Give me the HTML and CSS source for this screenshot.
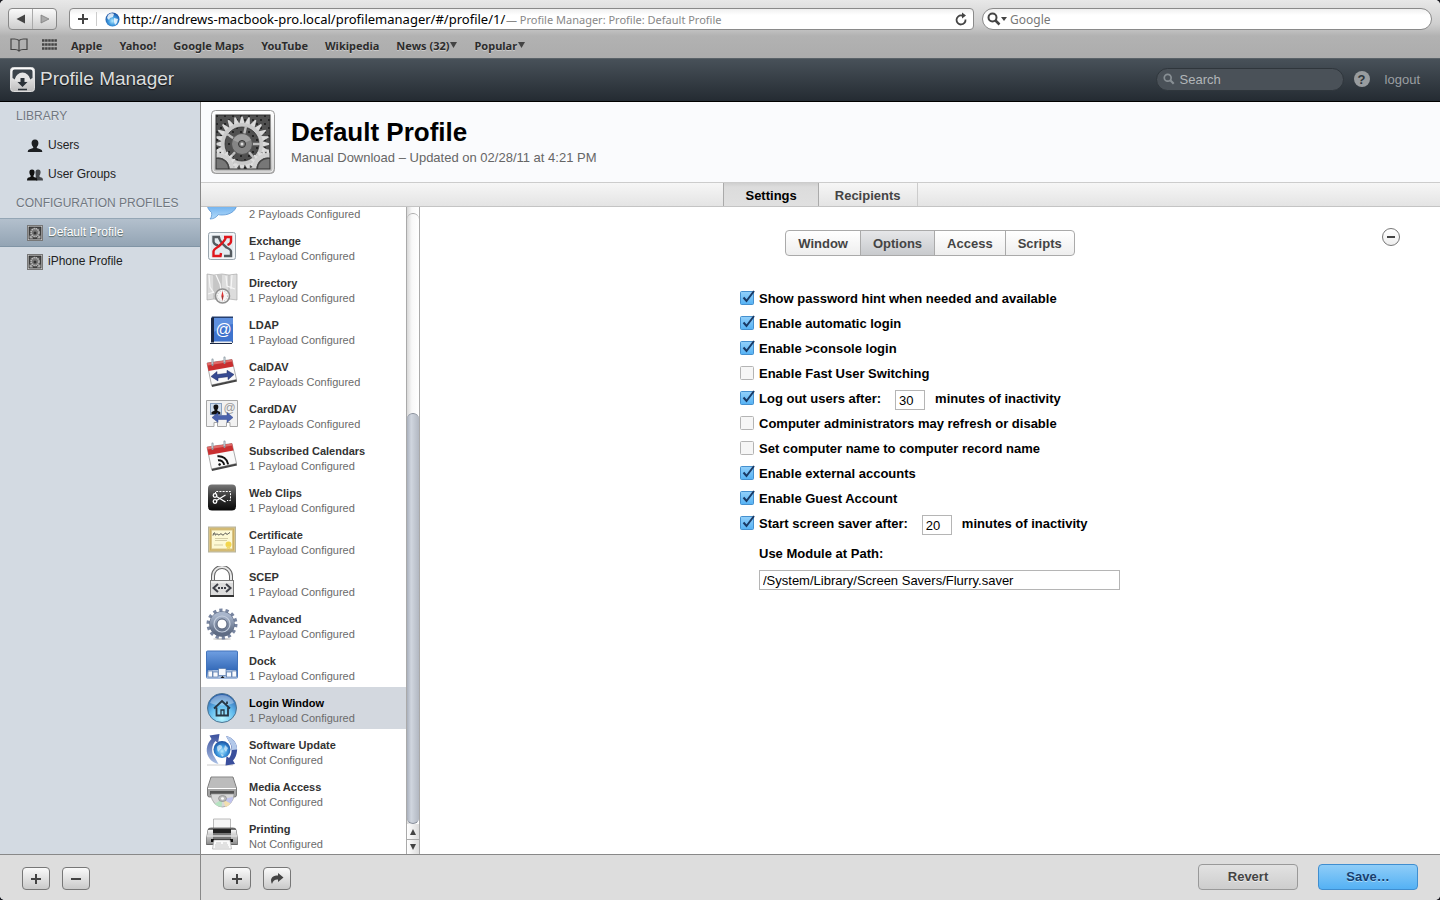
FILE: index.html
```html
<!DOCTYPE html>
<html lang="en">
<head>
<meta charset="utf-8">
<title>Profile Manager: Profile: Default Profile</title>
<link rel="stylesheet" href="styles.css">
</head>
<body>
<svg class="defs" aria-hidden="true">
  <defs>
    <linearGradient id="g-light" x1="0" y1="0" x2="0" y2="1"><stop offset="0" stop-color="#fff"/><stop offset="1" stop-color="#bdbdbd"/></linearGradient>
    <linearGradient id="g-steel" x1="0" y1="0" x2="0" y2="1"><stop offset="0" stop-color="#f4f4f4"/><stop offset="1" stop-color="#8d8d8d"/></linearGradient>
    <linearGradient id="g-dark" x1="0" y1="0" x2="0" y2="1"><stop offset="0" stop-color="#777"/><stop offset=".5" stop-color="#333"/><stop offset="1" stop-color="#080808"/></linearGradient>
    <linearGradient id="g-blue" x1="0" y1="0" x2="0" y2="1"><stop offset="0" stop-color="#6f9fe2"/><stop offset="1" stop-color="#1d55a8"/></linearGradient>
    <linearGradient id="g-chat" x1="0" y1="0" x2="0" y2="1"><stop offset="0" stop-color="#4f97e0"/><stop offset=".6" stop-color="#79b7f0"/><stop offset="1" stop-color="#b5dcfb"/></linearGradient>
    <linearGradient id="g-gear" x1="0" y1="0" x2="0" y2="1"><stop offset="0" stop-color="#a9b6cc"/><stop offset="1" stop-color="#5f6c84"/></linearGradient>
    <linearGradient id="g-navy" x1="0" y1="0" x2="0" y2="1"><stop offset="0" stop-color="#3a4f9c"/><stop offset="1" stop-color="#a9bfe4"/></linearGradient>
    <radialGradient id="g-orb" cx=".5" cy=".85" r=".85"><stop offset="0" stop-color="#b8f6ff"/><stop offset=".5" stop-color="#62bcee"/><stop offset="1" stop-color="#2456a8"/></radialGradient>
    <radialGradient id="g-globe" cx=".5" cy=".6" r=".6"><stop offset="0" stop-color="#b5eaff"/><stop offset=".5" stop-color="#3f9be0"/><stop offset="1" stop-color="#174a9c"/></radialGradient>
    <pattern id="p-dots" width="8" height="8" patternUnits="userSpaceOnUse"><rect width="8" height="8" fill="#505050"/><circle cx="2" cy="2" r="1" fill="#161616"/><circle cx="6" cy="6" r="1" fill="#161616"/></pattern>
    <clipPath id="c-plate"><rect x="5" y="5" width="54" height="54"/></clipPath>

    <g id="teeth3">
      <path id="tooth" d="M-2.800-20L-.7-27.500H.7L2.800-20z"/>
      <use href="#tooth" transform="rotate(15)"/>
      <use href="#tooth" transform="rotate(30)"/>
    </g>
    <g id="teeth-quarter"><use href="#teeth3"/><use href="#teeth3" transform="rotate(45)"/></g>
    <g id="teeth"><use href="#teeth-quarter"/><use href="#teeth-quarter" transform="rotate(90)"/><use href="#teeth-quarter" transform="rotate(180)"/><use href="#teeth-quarter" transform="rotate(270)"/></g>

    <symbol id="i-profile" viewBox="0 0 64 64">
      <rect x=".5" y=".5" width="63" height="63" rx="4" fill="url(#g-light)" stroke="#999"/>
      <rect x="2" y="2" width="60" height="60" rx="3" fill="none" stroke="#fff" stroke-opacity=".7"/>
      <g clip-path="url(#c-plate)">
        <rect x="5" y="5" width="54" height="54" fill="url(#p-dots)"/>
        <g transform="translate(31 34)" fill="#dadada">
          <use href="#teeth"/>
          <circle r="19" fill="none" stroke="#c9c9c9" stroke-width="4"/>
          <circle r="17" fill="none" stroke="#333" stroke-width=".8"/>
          <path d="M0 0L4-18M0 0H18M0 0L-15-10M0 0L-12 14M0 0L12 14" stroke="#bdbdbd" stroke-width="2.500"/>
          <circle r="10.500" fill="#858585" stroke="#555"/>
          <path d="M-9-4A10 10 0 0 1 9-4L0 0z" fill="#a0a0a0"/>
          <circle r="3.500" fill="#777" stroke="#333"/><circle r="1.500" fill="#ddd"/>
        </g>
        <g transform="translate(7 59) scale(.72)" fill="#dedede"><use href="#teeth"/><circle r="19" fill="#777" stroke="#d0d0d0" stroke-width="6"/><circle r="15" fill="#777" stroke="#444" stroke-width="2"/></g>
        <g transform="translate(57 59) scale(.72)" fill="#dedede"><use href="#teeth"/><circle r="19" fill="#777" stroke="#d0d0d0" stroke-width="6"/><circle r="15" fill="#777" stroke="#444" stroke-width="2"/></g>
      </g>
      <rect x="5" y="5" width="54" height="54" fill="none" stroke="#333"/>
    </symbol>

    <symbol id="i-profile-small" viewBox="0 0 16 16">
      <rect x=".5" y=".5" width="15" height="15" fill="#dcdcdc" stroke="#777"/>
      <rect x="2" y="2" width="12" height="12" fill="#505050" stroke="#222" stroke-width=".8"/>
      <circle cx="8" cy="7.500" r="4" fill="#777" stroke="#bdbdbd" stroke-width="1.500" stroke-dasharray="1.500 .6"/>
      <circle cx="8" cy="8" r="1.500" fill="#333"/>
      <path d="M2.500 10.500Q5 10.500 6 13.500H2.500zM13.500 10.500Q11 10.500 10 13.500h3.500z" fill="#aaa"/>
    </symbol>

    <symbol id="i-user" viewBox="0 0 16 16">
      <path d="M8 1.500c2.600 0 3.600 1.700 3.400 4-.1 1.500-.8 2.700-1.600 3.400v1.200c1.800.8 4.200 1.100 4.900 1.900.4.500.5 1.200.6 2.000H.7c.1-.8.200-1.500.6-2 .7-.8 3.100-1.100 4.900-1.900V8.900C5.400 8.200 4.700 7 4.600 5.500 4.400 3.200 5.400 1.500 8 1.500z" fill="#1d1f22"/>
    </symbol>
    <symbol id="i-users" viewBox="0 0 16 16">
      <path d="M11 2.500c1.900 0 2.700 1.200 2.600 3.100-.1 1.300-.5 2.300-1.100 2.900v1.300c1.300.6 2.600.9 3 1.500.4.500.4 1.300.5 2.200H9L8.500 5.500C8.400 3.700 9.300 2.500 11 2.500z" fill="#44474b"/>
      <path d="M5 2.500c1.900 0 2.700 1.200 2.600 3.100-.1 1.300-.5 2.300-1.100 2.900v1.300c1.300.6 2.800.9 3.300 1.500.4.500.4 1.300.5 2.200H0c.1-.9.100-1.700.5-2.200.5-.6 1.800-.9 3.100-1.500V8.500c-.6-.6-1.100-1.600-1.200-2.900C2.300 3.700 3.100 2.500 5 2.500z" fill="#111"/>
    </symbol>

    <symbol id="i-chat" viewBox="0 0 32 32">
      <path d="M16 3c9 0 15 5 15 12S25 27 16 27c-1.500 0-2.500 0-3.700-.4C10.500 29 8 31 4 31c1.500-1.500 2-4 1.500-6.500C2.500 22 1 19 1 15 1 8 7 3 16 3z" fill="url(#g-chat)" stroke="#5b95d3" stroke-width=".8"/>
    </symbol>

    <symbol id="i-exchange" viewBox="0 0 32 32">
      <rect x="2.500" y="2.500" width="27" height="27" rx="2" fill="#e4ebf0" stroke="#9ba6ae"/>
      <rect x="4" y="4" width="24" height="24" rx="1" fill="none" stroke="#fff"/>
      <g fill="none" stroke-width="2.400">
        <path d="M14 7H7.500v4.500q0 2.500 4.500 4" stroke="#555b60"/><path d="M13 7q0 4 7.500 10.500 4.500 2 4.500 4V26h-7" stroke="#555b60"/>
        <path d="M18 7h7v4.500q0 2-3.500 3.500" stroke="#e0161c"/><path d="M20 7q-1 4-7.500 9.500-5 3-5 5V26h7l.5-3" stroke="#e0161c"/>
      </g>
    </symbol>

    <symbol id="i-directory" viewBox="0 0 32 32">
      <path d="M1 2l7 1 8-1 7 1 8-1v26l-8-1-7 1-8-1-7 1z" fill="#dcdcdc" stroke="#aaa" stroke-width=".7"/>
      <path d="M8 3v24M23 3v24" stroke="#b5b5b5"/><path d="M8 3l8-1v26l-8-1z" fill="#c6c6c6"/><path d="M3 3l1 12 4 6M10 3l4 9 1 6M20 4l1 10 8 3M26 3l-1 14M2 22l6-2" fill="none" stroke="#f6f6f6" stroke-width="1.200"/>
      <circle cx="16.500" cy="24" r="7" fill="#f6f6f6" stroke="#8f8f8f" stroke-width="1.600"/>
      <circle cx="16.500" cy="24" r="5" fill="none" stroke="#bbb" stroke-dasharray="1 1.500"/>
      <path d="M16.500 19l1.200 5h-2.400z" fill="#d33"/><path d="M16.500 29l1.200-5h-2.400z" fill="#a33"/>
    </symbol>

    <symbol id="i-ldap" viewBox="0 0 32 32">
      <path d="M6 2.500h21V29H5V4.500z" fill="#263f6e"/><path d="M4.500 27h21l1 2H5z" fill="#f0f0f0"/>
      <rect x="8" y="4" width="19" height="23.500" fill="#3f74ce"/><path d="M5 4.500L8 3v25.500H5z" fill="#1b2844"/>
      <path d="M8 4h19v6q-10 1-19 8z" fill="#5f90df"/><path d="M4 29.500h22" stroke="#1b2844"/>
      <text x="17.500" y="21" text-anchor="middle" class="glyph" font-size="16" fill="#fff">@</text>
    </symbol>

    <g id="cal-base">
      <path d="M1 7l25-3.500 4.500 20L5.500 29z" fill="#fafafa" stroke="#888" stroke-width=".7"/>
      <path d="M5.500 29l25-5.500.5 2-25 5.500z" fill="#444"/>
      <path d="M1 7l25-3.500 1.500 7L2.500 15z" fill="#c92f30"/><path d="M1 7l25-3.500.5 2L1.500 9.500z" fill="#df6a68"/>
      <path d="M6.500 9V3.500M18.500 7V1.500" stroke="#8d9aa2" stroke-width="2" stroke-linecap="round"/><path d="M6.200 8V3.500M18.200 6V1.500" stroke="#dbe4ea" stroke-width=".8"/>
    </g>
    <symbol id="i-caldav" viewBox="0 0 32 32"><use href="#cal-base"/><path d="M5 20.500l6-5v3l10-1.200v-3l7 4.200-6 5.200v-3l-10 1.200v3z" fill="#364a92" stroke="#222f66" stroke-width=".5"/></symbol>
    <symbol id="i-subcal" viewBox="0 0 32 32"><use href="#cal-base"/><g transform="translate(1 1) rotate(-8 16 19)" fill="none" stroke="#111" stroke-width="2"><path d="M11 18.500a5.500 5.500 0 0 1 5.500 5.500M11 14.500a9.500 9.500 0 0 1 9.500 9.500"/><circle cx="12" cy="23" r=".8" fill="#111" stroke-width="1"/></g></symbol>

    <symbol id="i-carddav" viewBox="0 0 32 32">
      <path d="M.5 2.500h31v26H24v-4h-3.500v4h-9v-4H8v4H.500z" fill="#f2f2f2" stroke="#a6a6a6"/>
      <rect x="4.500" y="5.500" width="11" height="11" fill="#cfdded" stroke="#8aa2c0"/>
      <path d="M10 6.500c2 0 2.500 1.200 2.300 3-.1 1-.5 1.700-1 2.200v1c1 .5 2.500.7 3 1.500v2H5.500v-2c.5-.8 2-1 3-1.500v-1c-.5-.5-.9-1.200-1-2.200-.2-1.800.5-3 2.500-3z" fill="#111"/>
      <text x="23.500" y="14" text-anchor="middle" class="glyph" font-size="12" fill="#999">@</text>
      <path d="M6 19.500l6-5v3h9v-3l6 5-6 5v-3h-9v3z" fill="#4a62ad" stroke="#33488c" stroke-width=".5"/>
    </symbol>

    <symbol id="i-webclips" viewBox="0 0 32 32">
      <rect x="2" y="2.500" width="28" height="26" rx="4" fill="url(#g-dark)"/>
      <path d="M9.500 12V9.500h15v9H21" fill="none" stroke="#fff" stroke-dasharray="2 1.200"/>
      <g fill="none" stroke="#fff" stroke-width="1.300"><circle cx="9" cy="13.500" r="1.800"/><circle cx="9" cy="19.500" r="1.800"/><path d="M10.500 14.500l9 5.500M10.500 18.500l9-5.500"/></g>
    </symbol>

    <symbol id="i-cert" viewBox="0 0 32 32">
      <rect x="2.500" y="3" width="27" height="25" fill="#d9c488" stroke="#b7b49d"/>
      <rect x="4.500" y="5" width="23" height="21" fill="none" stroke="#cdb060"/>
      <rect x="6" y="6.500" width="20" height="18" fill="#fdf9d4"/>
      <path d="M7 11.500c1-4 2-3 2-1s2-2 3 0 2-2 4 0 3-3 4-1 2 0 4-1" fill="none" stroke="#444" stroke-width="1"/>
      <path d="M9 14.500h13M9 16.500h12M8 21h9" stroke="#c3bc92" stroke-width=".7"/><circle cx="22.500" cy="20.500" r="3" fill="#f3d64d"/><path d="M21 22l-.5 4 2-1.500 2 1.500-.5-4" fill="#efd86d"/>
    </symbol>

    <symbol id="i-scep" viewBox="0 0 32 32">
      <path d="M7 17V10a9 9 0 0 1 18 0v7" fill="none" stroke="#666" stroke-width="4"/><path d="M7 17V10a9 9 0 0 1 18 0v7" fill="none" stroke="#e8e8e8" stroke-width="2"/>
      <rect x="4.500" y="14.500" width="23" height="15" fill="#ddd" stroke="#777"/><path d="M4 30h24" stroke="#333" stroke-width="2"/><path d="M5 16h22" stroke="#fff"/>
      <path d="M12 18l-4.500 4 4.500 4M20 18l4.500 4-4.500 4" fill="none" stroke="#3e4048" stroke-width="2"/><path d="M12 22h8" stroke="#3e4048" stroke-width="2" stroke-dasharray="2 1"/>
    </symbol>

    <symbol id="i-gear" viewBox="0 0 32 32">
      <ellipse cx="16" cy="31" rx="9" ry="1" fill="#ccc"/>
      <circle cx="16" cy="16" r="13" fill="none" stroke="#7885a0" stroke-width="5" stroke-dasharray="3 2.834"/>
      <circle cx="16" cy="16" r="8.500" fill="none" stroke="#606d85" stroke-width="8.500"/>
      <circle cx="16" cy="16" r="8.700" fill="none" stroke="url(#g-gear)" stroke-width="7"/>
      <circle cx="16" cy="16" r="8" fill="none" stroke="#c3cddc" stroke-width="1.200"/>
      <circle cx="16" cy="16" r="5" fill="#fff" stroke="#58647b"/>
    </symbol>

    <symbol id="i-dock" viewBox="0 0 32 32">
      <rect x=".5" y="1" width="31" height="27" rx="1" fill="url(#g-blue)" stroke="#4273bb"/>
      <path d="M2 20h28l1.500 8.500H.500z" fill="#a9c0e0"/>
      <g fill="#f7f9fc" stroke="#5377ab" stroke-width=".7"><rect x="2" y="21" width="4.500" height="6"/><rect x="7" y="22" width="5" height="5"/><rect x="12.500" y="18.500" width="7.500" height="7"/><rect x="20.500" y="22" width="5" height="5"/><rect x="26" y="21" width="4.500" height="6"/></g>
      <path d="M14.500 28l2-2 2 2z" fill="#111"/>
    </symbol>

    <symbol id="i-login" viewBox="0 0 32 32">
      <circle cx="16" cy="16" r="14.500" fill="url(#g-orb)" stroke="#4c7593"/>
      <path d="M4 11a13 13 0 0 1 24 0q-12 5-24 0z" fill="#fff" opacity=".35"/>
      <path d="M8 16.500L16 9l8 7.500M10.500 15.500v8h11.500v-8M21 12V9.500" fill="none" stroke="#263644" stroke-width="1.800"/>
      <path d="M15 23v-5h3v5" fill="none" stroke="#263644" stroke-width="1.300"/>
    </symbol>

    <symbol id="i-update" viewBox="0 0 32 32">
      <path d="M1 31h26" stroke="#ccc"/>
      <circle cx="16" cy="15.500" r="8.500" fill="url(#g-globe)"/>
      <path d="M11 13c2-3 5-2 5 0s-2 2-3 4-2-1-2-4zM19 11l3 3-2 4-2-3zM15 20l3 1-2 2z" fill="#fff" opacity=".6"/>
      <path d="M12.500 30C5 28.500 0 22 .8 14.500 1.200 10.500 3 7.500 5.500 5L3.500 1.500 13.500 0 12 9.500 9.500 7C5.500 11 5 18.500 8.500 23z" fill="url(#g-navy)"/>
      <path d="M20 2C27.500 3.500 31.800 10 31 17c-.4 4-1.500 7-4 9.500l2 3.500-9.500 1.500 1-9.500 2.500 2C26.500 20 26.500 12 23 7.500z" fill="#3a4f9c"/><path d="M20 2C27 3.500 31 9 31.100 15.500L26 16Q26 11 23 7.500z" fill="#b3c9ea"/>
    </symbol>

    <symbol id="i-media" viewBox="0 0 32 32">
      <path d="M5 1h22l3.500 11v7a2 2 0 0 1-2 2h-25a2 2 0 0 1-2-2v-7z" fill="#a4a4a4" stroke="#666" stroke-width=".8"/>
      <path d="M5.500 1.500h21L30 12H2z" fill="#bcbcbc"/><path d="M2 12.500h28" stroke="#fff"/><rect x="4" y="15" width="24" height="4" fill="#555"/>
      <path d="M5 18a11.500 13 0 0 0 23 0z" fill="#d8d8d8" stroke="#999" stroke-width=".7"/><path d="M16.500 23l-8 5q4 3 7 3z" fill="#b6e3c1"/><path d="M17 23l10-2q0 4-3 7z" fill="#bfc3ee"/><path d="M16.500 23l3 8q3-1 5-3.500z" fill="#f2dfb0"/>
      <ellipse cx="16.500" cy="22.500" rx="4" ry="3" fill="#bbb" stroke="#888" stroke-width=".7"/><ellipse cx="16.500" cy="22.500" rx="1.500" ry="1.200" fill="#fff"/>
    </symbol>

    <symbol id="i-print" viewBox="0 0 32 32">
      <path d="M7.500 12V1h17v11" fill="#f5f5f5" stroke="#aaa" stroke-width=".8"/>
      <path d="M2 12q0-2 3-2h22q3 0 3 2l1.500 9v5.500h-31V21z" fill="#777" stroke="#444" stroke-width=".7"/>
      <path d="M2 12h5v14H.500V21zM30 12h-5v14h6.500V21z" fill="url(#g-steel)"/><path d="M7 11h18v4H7z" fill="#222"/><path d="M1 18h30" stroke="#ddd" stroke-width="1.500"/><rect x="5" y="21" width="22" height="3" fill="#111"/>
      <path d="M8 22h16l1.500 9h-19z" fill="#fafafa" stroke="#aaa" stroke-width=".7"/><path d="M10 25h5M17 25h4M9 27h13M9 29h14" stroke="#bbb" stroke-width=".8"/>
    </symbol>

    <symbol id="i-plus" viewBox="0 0 12 12"><path d="M6 1v10M1 6h10" stroke="currentColor" stroke-width="2"/></symbol>
    <symbol id="i-minus" viewBox="0 0 12 12"><path d="M1 6h10" stroke="currentColor" stroke-width="2"/></symbol>
    <symbol id="i-lens" viewBox="0 0 14 14"><circle cx="5.500" cy="5.500" r="4" fill="none" stroke="currentColor" stroke-width="2"/><path d="M8.500 8.500l4 4" stroke="currentColor" stroke-width="2.500"/></symbol>
  </defs>
</svg>

<div class="window">
  <div class="chrome">
    <div class="chrome-row">
      <div class="nav">
        <button type="button" aria-label="Back"><svg width="10" height="10" viewBox="0 0 10 10"><path d="M9 .5v9L.5 5z" fill="#444"/></svg></button>
        <button type="button" aria-label="Forward"><svg width="10" height="10" viewBox="0 0 10 10"><path d="M1 1v8l8-4z" fill="#aaa" stroke="#777" stroke-width=".7"/></svg></button>
      </div>
      <div class="address">
        <button type="button" class="address-add" aria-label="Add bookmark"><svg width="12" height="12"><use href="#i-plus"/></svg></button>
        <svg class="globe" width="15" height="15" viewBox="0 0 15 15"><circle cx="7.500" cy="7.500" r="7" fill="url(#g-globe)"/><path d="M3 3c2-2 5-2 6-1L8 5 5 6 4 8 2 6zM9 6l4 1-1 4-2 2-1-3z" fill="#fff" opacity=".8"/></svg>
        <input class="url" type="text" aria-label="Address" value="http://andrews-macbook-pro.local/profilemanager/#/profile/1/">
        <span class="page-title">— Profile Manager: Profile: Default Profile</span>
        <button type="button" aria-label="Reload"><svg width="12" height="14" viewBox="0 0 12 14"><path d="M10.500 7.500A4.500 4.500 0 1 1 6.500 3.500H8" fill="none" stroke="#444" stroke-width="1.800"/><path d="M7 .5l4 3-4 3z" fill="#444"/></svg></button>
      </div>
      <label class="google">
        <svg width="14" height="14"><use href="#i-lens"/></svg><svg width="6" height="4"><path d="M0 0h6L3 4z" fill="#444"/></svg>
        <input type="search" placeholder="Google" aria-label="Google search">
      </label>
    </div>
    <nav class="bookmarks">
      <svg width="18" height="14" viewBox="0 0 18 14" fill="none" stroke="#444" stroke-width="1.200"><path d="M9 2.500Q7 1 4.500 1H1v10.500h4q2.500 0 4 1.500 1.500-1.500 4-1.500h4V1h-3.500Q11 1 9 2.500zM9 2.500V13"/></svg>
      <svg width="15" height="12" viewBox="0 0 15 12" fill="none" stroke="#444" stroke-width="2.500"><path d="M0 1.500h15M0 5.500h15M0 9.500h15" stroke-dasharray="2.500 .6"/></svg>
      <div class="links"><a href="#">Apple</a><a href="#">Yahoo!</a><a href="#">Google Maps</a><a href="#">YouTube</a><a href="#">Wikipedia</a><a href="#">News (32)<svg width="7" height="6"><path d="M0 0h7L3.500 6z" fill="#444"/></svg></a><a href="#">Popular<svg width="7" height="6"><path d="M0 0h7L3.500 6z" fill="#444"/></svg></a></div>
    </nav>
  </div>

  <header class="app-header">
    <svg width="25" height="25" viewBox="0 0 25 25"><rect x=".5" y=".5" width="24" height="24" rx="3" fill="url(#g-light)" stroke="#ddd"/><path d="M2.500 11V4.500q0-2 2-2h16q2 0 2 2V11l-2.500 1.500Q18 7 12.500 7T5 12.500z" fill="#3b434a"/><path d="M5 12q1.500-6 7.500-6.500 6 .5 7.500 6.500v2H5z" fill="#e4e4e4"/><path d="M10.500 11h4v4h3l-5 5-5-5h3z" fill="#2b3238"/><path d="M8 22.500h9" stroke="#2b3238" stroke-width="1.500"/></svg>
    <span class="app-name">Profile Manager</span>
    <label class="app-search"><svg width="12" height="12" viewBox="0 0 14 14"><use href="#i-lens"/></svg><input type="search" placeholder="Search" aria-label="Search"></label>
    <button type="button" class="help" aria-label="Help">?</button>
    <a class="logout" href="#">logout</a>
  </header>

  <div class="body">
    <aside class="sidebar">
      <nav class="library">
        <h2>LIBRARY</h2>
        <a href="#"><svg width="16" height="16"><use href="#i-user"/></svg>Users</a>
        <a href="#"><svg width="16" height="16"><use href="#i-users"/></svg>User Groups</a>
        <h2>CONFIGURATION PROFILES</h2>
        <a href="#" class="current"><svg width="16" height="16"><use href="#i-profile-small"/></svg>Default Profile</a>
        <a href="#"><svg width="16" height="16"><use href="#i-profile-small"/></svg>iPhone Profile</a>
      </nav>
      <div class="footer">
        <button type="button" class="square" aria-label="Add profile"><svg width="12" height="12"><use href="#i-plus"/></svg></button>
        <button type="button" class="square" aria-label="Remove profile"><svg width="12" height="12"><use href="#i-minus"/></svg></button>
      </div>
    </aside>

    <main class="pane">
      <div class="profile-head">
        <svg width="64" height="64"><use href="#i-profile"/></svg>
        <div><h1>Default Profile</h1><p>Manual Download – Updated on 02/28/11 at 4:21 PM</p></div>
      </div>
      <div class="tabs"><button type="button" class="on">Settings</button><button type="button">Recipients</button></div>

      <div class="split">
        <div class="payloads">
          <nav class="payload-list">
            <a href="#"><svg width="32" height="32"><use href="#i-chat"/></svg><span><b>&nbsp;</b>2 Payloads Configured</span></a>
            <a href="#"><svg width="32" height="32"><use href="#i-exchange"/></svg><span><b>Exchange</b>1 Payload Configured</span></a>
            <a href="#"><svg width="32" height="32"><use href="#i-directory"/></svg><span><b>Directory</b>1 Payload Configured</span></a>
            <a href="#"><svg width="32" height="32"><use href="#i-ldap"/></svg><span><b>LDAP</b>1 Payload Configured</span></a>
            <a href="#"><svg width="32" height="32"><use href="#i-caldav"/></svg><span><b>CalDAV</b>2 Payloads Configured</span></a>
            <a href="#"><svg width="32" height="32"><use href="#i-carddav"/></svg><span><b>CardDAV</b>2 Payloads Configured</span></a>
            <a href="#"><svg width="32" height="32"><use href="#i-subcal"/></svg><span><b>Subscribed Calendars</b>1 Payload Configured</span></a>
            <a href="#"><svg width="32" height="32"><use href="#i-webclips"/></svg><span><b>Web Clips</b>1 Payload Configured</span></a>
            <a href="#"><svg width="32" height="32"><use href="#i-cert"/></svg><span><b>Certificate</b>1 Payload Configured</span></a>
            <a href="#"><svg width="32" height="32"><use href="#i-scep"/></svg><span><b>SCEP</b>1 Payload Configured</span></a>
            <a href="#"><svg width="32" height="32"><use href="#i-gear"/></svg><span><b>Advanced</b>1 Payload Configured</span></a>
            <a href="#"><svg width="32" height="32"><use href="#i-dock"/></svg><span><b>Dock</b>1 Payload Configured</span></a>
            <a href="#" class="current"><svg width="32" height="32"><use href="#i-login"/></svg><span><b>Login Window</b>1 Payload Configured</span></a>
            <a href="#"><svg width="32" height="32"><use href="#i-update"/></svg><span><b>Software Update</b>Not Configured</span></a>
            <a href="#"><svg width="32" height="32"><use href="#i-media"/></svg><span><b>Media Access</b>Not Configured</span></a>
            <a href="#"><svg width="32" height="32"><use href="#i-print"/></svg><span><b>Printing</b>Not Configured</span></a>
          </nav>
          <div class="scrollbar">
            <div class="track"></div>
            <div class="thumb"></div>
            <button type="button" aria-label="Scroll up"><svg width="6" height="6"><path d="M0 6h6L3 0z" fill="#444"/></svg></button>
            <button type="button" aria-label="Scroll down"><svg width="6" height="6"><path d="M0 0h6L3 6z" fill="#444"/></svg></button>
          </div>
        </div>

        <section class="settings">
          <div class="settings-top">
            <div class="segments"><button type="button">Window</button><button type="button" class="on">Options</button><button type="button">Access</button><button type="button">Scripts</button></div>
            <button type="button" class="remove" aria-label="Remove payload"><svg width="8" height="2"><path d="M0 1h8" stroke="#444" stroke-width="2"/></svg></button>
          </div>
          <form class="options">
            <div class="opt"><input type="checkbox" id="o1" checked><label for="o1">Show password hint when needed and available</label></div>
            <div class="opt"><input type="checkbox" id="o2" checked><label for="o2">Enable automatic login</label></div>
            <div class="opt"><input type="checkbox" id="o3" checked><label for="o3">Enable &gt;console login</label></div>
            <div class="opt"><input type="checkbox" id="o4"><label for="o4">Enable Fast User Switching</label></div>
            <div class="opt"><input type="checkbox" id="o5" checked><label for="o5">Log out users after:</label><input type="text" class="minutes" id="m1" value="30"><label for="m1">minutes of inactivity</label></div>
            <div class="opt"><input type="checkbox" id="o6"><label for="o6">Computer administrators may refresh or disable</label></div>
            <div class="opt"><input type="checkbox" id="o7"><label for="o7">Set computer name to computer record name</label></div>
            <div class="opt"><input type="checkbox" id="o8" checked><label for="o8">Enable external accounts</label></div>
            <div class="opt"><input type="checkbox" id="o9" checked><label for="o9">Enable Guest Account</label></div>
            <div class="opt"><input type="checkbox" id="o10" checked><label for="o10">Start screen saver after:</label><input type="text" class="minutes" id="m2" value="20"><label for="m2">minutes of inactivity</label></div>
            <div class="path"><label for="path">Use Module at Path:</label><input type="text" id="path" value="/System/Library/Screen Savers/Flurry.saver"></div>
          </form>
        </section>
      </div>

      <div class="footer">
        <button type="button" class="square" aria-label="Add payload"><svg width="12" height="12"><use href="#i-plus"/></svg></button>
        <button type="button" class="square" aria-label="Share"><svg width="14" height="12" viewBox="0 0 14 12"><path d="M8 0l5.500 4.500L8 9V6.500C5 6.300 3 7.500 2 11-.5 6 2 2.500 8 2.500z" fill="currentColor"/></svg></button>
        <div class="actions">
          <button type="button" class="wide revert">Revert</button>
          <button type="button" class="wide save">Save…</button>
        </div>
      </div>
    </main>
  </div>
</div>
</body>
</html>
```
FILE: styles.css
```css
* { box-sizing: border-box; }

body {
  margin: 0;
  background: #1c1c22;
  font: 12px/15px "Liberation Sans", Arial, sans-serif;
  color: #222;
}

button, input { font: inherit; color: inherit; margin: 0; padding: 0; border: 0; background: none; outline: 0; }
button { display: flex; align-items: center; justify-content: center; }
input[type="search"] { appearance: none; }
a { color: inherit; text-decoration: none; }
h1, h2, p { margin: 0; font-weight: normal; }
svg { display: block; flex: none; }
.defs { position: absolute; width: 0; height: 0; }
.glyph { font-family: "Liberation Sans", Arial, sans-serif; }

.window { display: flex; flex-direction: column; height: 100vh; border-radius: 5px; overflow: hidden; background: #fff; }

/* Browser toolbar */
.chrome {
  flex: none;
  padding-top: 8px;
  height: 58px;
  background: linear-gradient(#e8e8e8, #cfcfcf 24px, #b2b2b2 36px, #acacac);
  font-family: "Noto Sans", "Open Sans", sans-serif;
}
.chrome-row { display: flex; height: 22px; padding: 0 8px; }
.nav { display: flex; width: 49px; margin-right: 12px; border: 1px solid #888; border-radius: 4px; background: linear-gradient(#fafafa, #cdcdcd); }
.nav button { flex: 1; }
.nav button + button { border-left: 1px solid #aaa; }
.address, .google { display: flex; align-items: center; border: 1px solid #8a8a8a; background: linear-gradient(#f0f0f0, #fff 6px); }
.address { flex: 1; margin-right: 8px; padding-right: 6px; border-radius: 4px; }
.address-add { width: 27px; height: 14px; border-right: 1px solid #ccc; color: #444; }
.globe { margin: 0 3px 0 8px; }
.url { width: 383px; font-size: 13px; color: #000; }
.page-title { flex: 1; font-size: 11px; color: #888; }
.google { width: 450px; padding-left: 4px; border-radius: 11px; color: #444; }
.google input { flex: 1; margin-left: 3px; font-size: 12px; }
.google input::placeholder { color: #777; }
.bookmarks { display: flex; align-items: center; gap: 14px; height: 28px; padding: 2px 10px 0; font-size: 11px; font-weight: bold; color: #2c2c2c; text-shadow: 0 1px 0 #ccc; }
.links { display: flex; gap: 17px; }
.links a { display: flex; align-items: center; gap: 1px; }

/* Application header */
.app-header { display: flex; align-items: center; flex: none; height: 44px; padding: 0 20px 2px 10px; border-top: 1px solid #5a6268; border-bottom: 1px solid #000; background: linear-gradient(#485159, #242b32); color: #9b9fa2; font-size: 13px; }
.app-name { flex: 1; margin-left: 5px; font-size: 19px; line-height: 24px; color: #dcdedf; text-shadow: 0 1px 1px #111; }
.app-search { display: flex; align-items: center; width: 188px; height: 23px; padding-left: 6px; border: 1px solid #2f363c; border-radius: 12px; background: #4a5158; color: #888f94; }
.app-search input { flex: 1; min-width: 0; margin-left: 5px; }
.app-search input::placeholder { color: #b2b6b9; opacity: 1; }
.help { width: 16px; height: 16px; margin: 0 15px 0 10px; border-radius: 8px; background: #989c9f; color: #2e353b; font-weight: bold; }

/* Sidebar */
.body { display: flex; flex: 1; min-height: 0; }
.sidebar { display: flex; flex-direction: column; flex: none; width: 201px; border-right: 1px solid #888; background: #d3dae2; }
.library { flex: 1; }
.library h2 { padding-left: 16px; font-size: 12px; line-height: 29px; color: #70777f; text-shadow: 0 1px 0 #e4e9ee; }
.library a { display: flex; align-items: center; gap: 5px; height: 29px; padding-left: 27px; }
.library .current { border-top: 1px solid #94a6b5; border-bottom: 1px solid #8094a5; background: linear-gradient(#b3c0cd, #93a4b4); color: #fff; text-shadow: 0 1px 1px #566; }

.footer { display: flex; align-items: center; flex: none; gap: 12px; height: 46px; padding: 2px 22px 0; border-top: 1px solid #888; background: #ddd; }
.square { width: 28px; height: 23px; border: 1px solid #777; border-radius: 4px; background: linear-gradient(#fafafa, #c9c9c9); color: #444; }
.actions { display: flex; gap: 20px; margin-left: auto; padding-bottom: 4px; }
.wide { width: 100px; height: 26px; border: 1px solid #999; border-radius: 4px; font-size: 13px; font-weight: bold; }
.revert { background: linear-gradient(#e2e2e2, #cdcdcd); color: #444; text-shadow: 0 1px 0 #eee; }
.save { border-color: #3f8ed0; background: linear-gradient(#8fcdf8, #54b1f4); color: #173f70; text-shadow: 0 1px 0 #a6d9fa; }

/* Profile pane */
.pane { display: flex; flex-direction: column; flex: 1; min-width: 0; }
.profile-head { display: flex; align-items: center; flex: none; gap: 16px; height: 80px; padding-left: 10px; background: #fafbfd; }
h1 { font-size: 26px; line-height: 30px; font-weight: bold; color: #000; }
.profile-head p { padding-top: 2px; font-size: 13px; line-height: 18px; color: #666; }
.tabs { display: flex; justify-content: center; flex: none; height: 25px; border-top: 1px solid #ccc; border-bottom: 1px solid #c4c4c4; background: linear-gradient(#f6f6f6, #e4e4e4); font-size: 13px; font-weight: bold; color: #444; }
.tabs button { padding: 2px 16px 0; border-right: 1px solid #ccc; }
.tabs .on { padding: 2px 21px 0; border-left: 1px solid #aaa; border-right-color: #aaa; background: linear-gradient(#cfcfcf, #dcdcdc 4px, #e0e0e0); color: #000; }

.split { display: flex; flex: 1; min-height: 0; }
.payloads { display: flex; flex: none; width: 219px; overflow: hidden; }
/* list is scrolled so that its first row is partly hidden */
.payload-list { flex: 1; margin-top: -24px; }
.payload-list a { display: flex; align-items: center; gap: 11px; height: 42px; padding-left: 5px; font-size: 11px; color: #6b6b6b; }
.payload-list span { padding-top: 6px; }
.payload-list b { display: block; color: #333; }
.payload-list .current { background: #d3d8df; }
.payload-list .current b { color: #000; }

.scrollbar { display: flex; flex-direction: column; width: 14px; border: solid #aaa; border-width: 0 1px; background: linear-gradient(90deg, #d8d8d8, #f8f8f8 40%, #fff); }
.track { flex: 200; margin-top: 6px; border-top: 1px solid #aaa; border-radius: 6px 6px 0 0; }
.thumb { flex: 410; border: 1px solid #858c98; border-width: 1px 0; border-radius: 6px; background: linear-gradient(90deg, #a9b0bc, #d0d6df 35%, #b2b8c2); }
.scrollbar button { height: 15px; background: linear-gradient(90deg, #fff, #ddd); }
.scrollbar button + button { border-top: 1px solid #aaa; }

.settings { flex: 1; min-width: 0; padding: 23px 40px 0; }
.settings-top { display: grid; grid-template-columns: 1fr auto 1fr; align-items: start; height: 26px; }
.segments { grid-column: 2; display: flex; height: 26px; border: 1px solid #aaa; border-radius: 4px; overflow: hidden; background: linear-gradient(#fff, #eee); font-size: 13px; font-weight: bold; color: #444; }
.segments button { padding: 1px 12px 0; }
.segments button + button { border-left: 1px solid #aaa; }
.segments .on { background: linear-gradient(#e6e7e9, #c8cacd); }
.remove { justify-self: end; width: 18px; height: 18px; margin-top: -2px; border: 1px solid #777; border-radius: 9px; background: linear-gradient(#fff, #eee); }

.options { width: 380px; margin: 30px auto 0; font-size: 13px; font-weight: bold; color: #000; }
.opt { display: flex; align-items: center; height: 25px; white-space: nowrap; }
.opt label { margin-left: 3px; }
.opt input[type="checkbox"] {
  appearance: none;
  width: 16px;
  height: 16px;
  margin-bottom: 2px;
  background: url("data:image/svg+xml,%3Csvg xmlns='http://www.w3.org/2000/svg' width='16' height='16'%3E%3Crect x='.5' y='1.5' width='13' height='13' rx='1' fill='%23f6f6f6' stroke='%23b4b4b4'/%3E%3C/svg%3E") no-repeat;
}
.opt input[type="checkbox"]:checked {
  background-image: url("data:image/svg+xml,%3Csvg xmlns='http://www.w3.org/2000/svg' width='16' height='16'%3E%3ClinearGradient id='b' x2='0' y2='1'%3E%3Cstop stop-color='%2393d0fa'/%3E%3Cstop offset='1' stop-color='%2355b2f4'/%3E%3C/linearGradient%3E%3Crect x='.5' y='1.5' width='13' height='13' rx='1' fill='url(%23b)' stroke='%234590cf'/%3E%3Cpath d='M3.500 7.500l3 3.500L14 1' fill='none' stroke='%231a3a66' stroke-width='2'/%3E%3C/svg%3E");
}
.minutes, #path { height: 20px; padding: 1px 3px 0; border: 1px solid #b5b5b5; background: #fff; font-weight: normal; }
.minutes { width: 30px; margin: 2px 0 0 14px; }
.opt .minutes + label { margin-left: 10px; }
.path { display: flex; flex-direction: column; gap: 9px; padding: 10px 0 0 19px; }
```
